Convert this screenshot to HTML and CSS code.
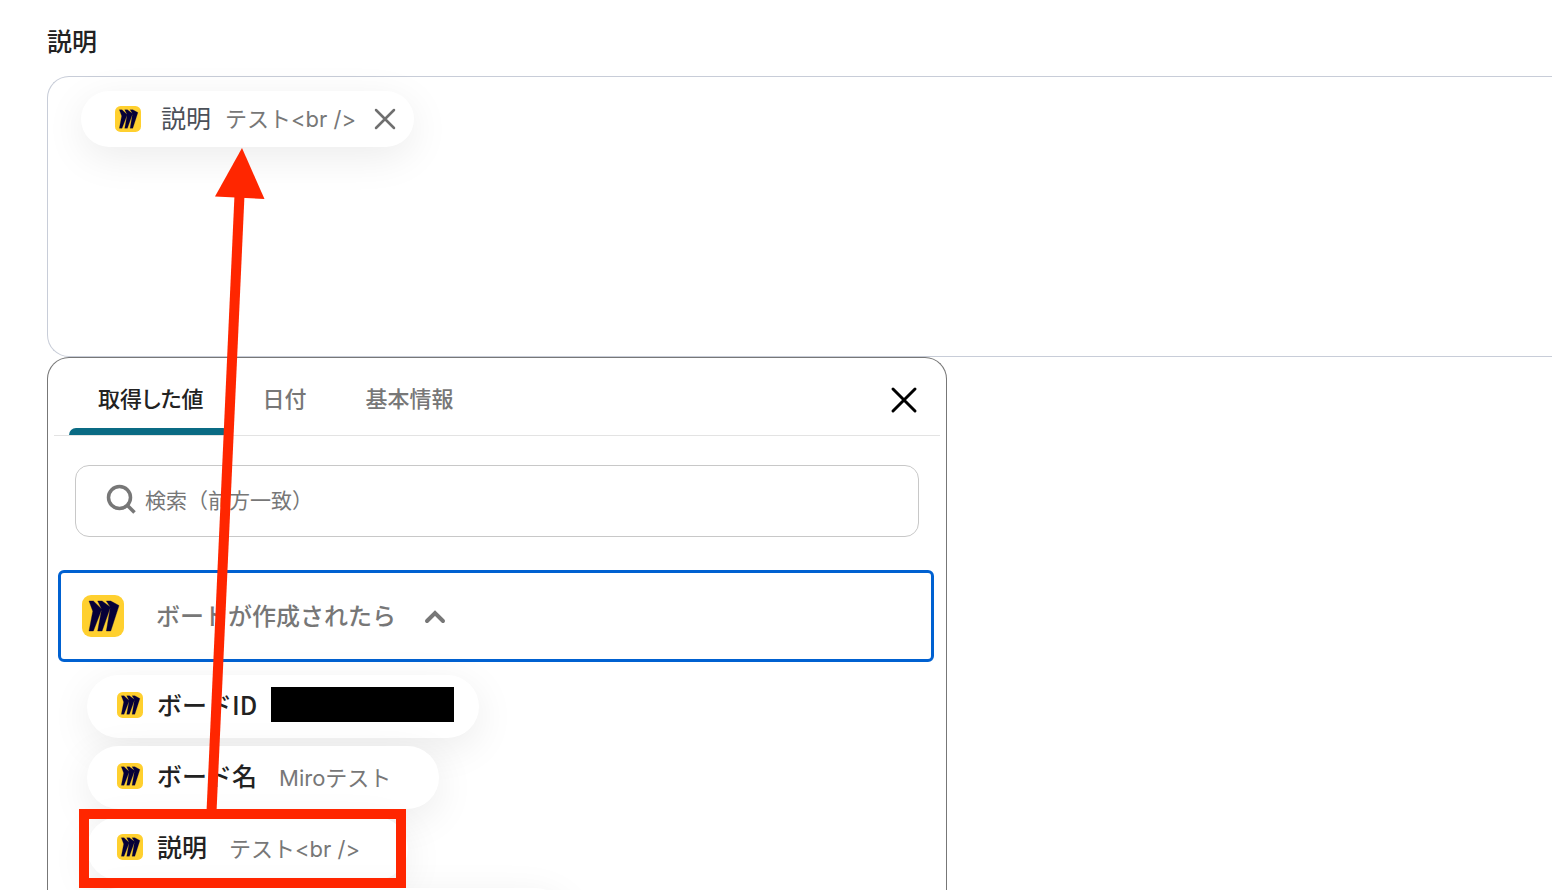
FILE: index.html
```html
<!DOCTYPE html>
<html lang="ja">
<head>
  <meta charset="UTF-8" />
  <meta name="viewport" content="width=device-width, initial-scale=1.0"/>
  <title>説明</title>
  <link rel="stylesheet" href="styles.css">
</head>
<body>

  <!-- Miro-ikon som återanvänds -->
  <svg class="sprite" aria-hidden="true">
    <symbol id="miro" viewBox="0 0 42 42">
      <rect width="42" height="42" rx="9" fill="#ffd02f"/>
      <path transform="translate(7 6) scale(1.25)" fill="#050038" stroke="#050038" stroke-width="0.3" d="M17.392 0H13.9L17 4.808 10.444 0H6.949l3.102 6.3L3.494 0H0l3.05 8.131L0 24h3.494L10.05 6.985 6.949 24h3.494L17 5.494 13.899 24h3.493L24 3.672 17.392 0z"/>
    </symbol>
  </svg>

  <main class="form">
    <h1 class="form-label">説明</h1>

    <div class="field">
      <div class="pill pill-selected">
        <svg class="icon"><use href="#miro"/></svg>
        <span class="pill-name">説明</span>
        <span class="pill-value">テスト&lt;br /&gt;</span>
        <button class="remove" aria-label="削除">
          <svg width="22" height="22" viewBox="0 0 22 22"><path d="M2 2l18 18M20 2L2 20"/></svg>
        </button>
      </div>
    </div>

    <section class="panel">
      <div class="tabs">
        <button class="tab active">取得した値</button>
        <button class="tab">日付</button>
        <button class="tab">基本情報</button>
        <button class="close" aria-label="閉じる">
          <svg width="28" height="28" viewBox="0 0 28 28"><path d="M3 3l22 22M25 3L3 25"/></svg>
        </button>
      </div>

      <label class="search">
        <svg width="30" height="30" viewBox="0 0 30 30"><circle cx="13.500" cy="13.500" r="11"/><path d="M21.500 21.500l7 7"/></svg>
        <input type="text" placeholder="検索（前方一致）" aria-label="検索">
      </label>

      <button class="group">
        <svg class="icon-large"><use href="#miro"/></svg>
        <span class="group-name">ボードが作成されたら</span>
        <svg class="chevron" width="22" height="16" viewBox="0 0 22 16"><path d="M3 13l8-8 8 8"/></svg>
      </button>

      <div class="values">
        <button class="pill redacted">
          <svg class="icon"><use href="#miro"/></svg>
          <span class="pill-name">ボードID</span>
          <span class="mask"></span>
        </button>
        <button class="pill">
          <svg class="icon"><use href="#miro"/></svg>
          <span class="pill-name">ボード名</span>
          <span class="pill-value">Miroテスト</span>
        </button>
        <button class="pill">
          <svg class="icon"><use href="#miro"/></svg>
          <span class="pill-name">説明</span>
          <span class="pill-value">テスト&lt;br /&gt;</span>
        </button>
        <div class="pill pill-next"></div>
      </div>
    </section>
  </main>

  <!-- Röd pil och ram ovanpå sidan -->
  <svg class="annotation" width="420" height="890" viewBox="0 0 420 890" aria-hidden="true">
    <path d="M239.500 195L211.500 812" stroke="#ff2600" stroke-width="10"/>
    <path d="M242 148L264.500 199L215 196.500Z" fill="#ff2600"/>
    <rect x="84" y="814" width="317" height="69" fill="none" stroke="#ff2600" stroke-width="10"/>
  </svg>

</body>
</html>
```
FILE: styles.css
```css
* {
  box-sizing: border-box;
}

body {
  margin: 0;
  height: 100vh;
  overflow: hidden;
  position: relative;
  background-color: #fff;
  color: #222;
  font-family: "Noto Sans CJK JP", sans-serif;
}

button {
  border: none;
  background: none;
  padding: 0;
  font: inherit;
  color: inherit;
  cursor: pointer;
}

svg {
  display: block;
  flex: none;
}

.sprite {
  position: absolute;
  width: 0;
  height: 0;
}

.form {
  display: flex;
  flex-direction: column;
  height: 100%;
  padding: 22px 0 0 47px;
}

.form-label {
  margin: 0 0 18px;
  font-size: 25px;
  line-height: 36px;
  font-weight: 500;
}

.field {
  flex: none;
  height: 281px;
  padding: 14px 33px;
  border: 1px solid #c8cdd8;
  border-right: none;
  border-radius: 22px 0 0 22px;
}

/* Piller */
.pill {
  display: flex;
  flex: none;
  align-items: center;
  width: fit-content;
  height: 63px;
  padding: 0 48px 4px 30px;
  border-radius: 32px;
  background-color: #fff;
  box-shadow: 0 10px 40px rgba(0, 0, 0, 0.08);
}

.pill-name {
  margin: 0 22px 0 14px;
  padding-bottom: 2px;
  font-size: 25px;
  font-weight: 500;
}

.pill-value {
  font-family: Inter, "Noto Sans CJK JP", sans-serif;
  font-size: 22px;
  color: #777;
  font-weight: 400;
}

.icon {
  width: 26px;
  height: 26px;
}

.pill-selected {
  height: 56px;
  padding: 0 18px 0 34px;
}

.pill-selected .pill-name {
  margin: 0 14px 0 20px;
  padding-bottom: 4px;
  font-weight: 400;
  color: #4b5058;
}

.pill-selected .pill-value {
  padding-bottom: 4px;
}

.remove {
  margin-left: 18px;
}

.remove path {
  stroke: #6f6f6f;
  stroke-width: 2.5;
  stroke-linecap: round;
}

.redacted {
  padding-right: 25px;
}

.redacted .pill-name {
  margin-right: 14px;
}

.mask {
  width: 183px;
  height: 35px;
  background-color: #000;
}

.pill-next {
  width: 480px;
}

/* Panel */
.panel {
  flex: 1;
  min-height: 0;
  max-width: 900px;
  width: 100%;
  overflow: hidden;
  padding: 0 6px;
  border: 1px solid #777;
  border-bottom: none;
  border-radius: 22px 22px 0 0;
  background-color: #fff;
}

.tabs {
  display: flex;
  height: 78px;
  padding: 0 22px 0 15px;
  border-bottom: 1px solid #e3e3e3;
}

.tab {
  position: relative;
  padding: 0 30px 0 29px;
  color: #777;
  font-size: 22px;
  font-weight: 500;
  font-feature-settings: "palt";
}

.active {
  color: #222;
}

.active::after {
  content: "";
  position: absolute;
  left: 0;
  right: 4px;
  bottom: 0;
  height: 7px;
  border-radius: 7px 7px 0 0;
  background-color: #0a6b84;
}

.close {
  margin-left: auto;
  padding-top: 6px;
}

.close path {
  stroke: #000;
  stroke-width: 3;
  stroke-linecap: round;
}

.search {
  display: flex;
  align-items: center;
  height: 72px;
  margin: 29px 21px 33px;
  padding: 0 30px 4px;
  border: 1px solid #c8c8c8;
  border-radius: 14px;
}

.search svg {
  fill: none;
  stroke: #777;
  stroke-width: 3.5;
}

.search input {
  flex: 1;
  margin-left: 9px;
  padding: 0;
  border: none;
  outline: none;
  background: none;
  font: inherit;
  font-size: 21px;
}

.search input::placeholder {
  color: #777;
  opacity: 1;
}

.group {
  display: flex;
  align-items: center;
  width: calc(100% - 10px);
  height: 92px;
  margin-left: 4px;
  padding: 0 21px;
  border: 3px solid #0061d1;
  border-radius: 6px;
  color: #777;
  font-size: 24px;
  font-weight: 500;
}

.icon-large {
  width: 42px;
  height: 42px;
  margin-right: 32px;
}

.group-name {
  padding-bottom: 4px;
}

.chevron {
  margin-left: 28px;
}

.chevron path {
  fill: none;
  stroke: #777;
  stroke-width: 4;
  stroke-linecap: round;
}

.values {
  display: flex;
  flex-direction: column;
  gap: 8px;
  margin: 13px 33px;
}

.annotation {
  position: absolute;
  top: 0;
  left: 0;
  pointer-events: none;
}
```
